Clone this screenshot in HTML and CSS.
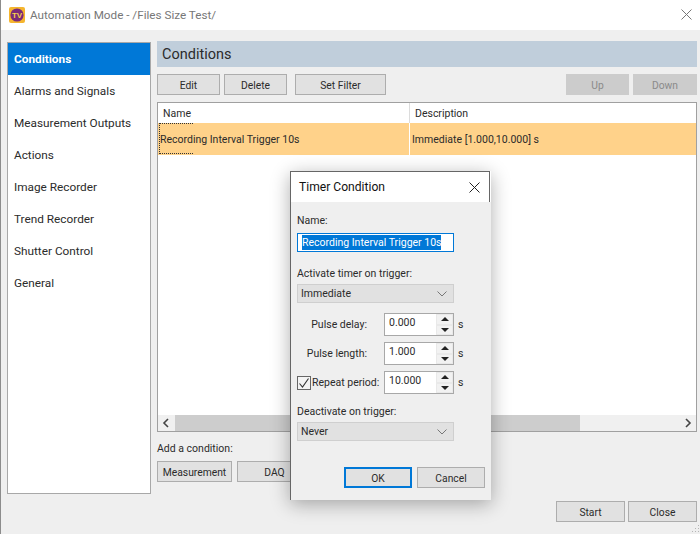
FILE: index.html
```html
<!DOCTYPE html>
<html lang="en">
<head>
<meta charset="utf-8">
<title>Automation Mode</title>
<link rel="stylesheet" href="styles.css">
</head>
<body>
<div class="window">
  <header class="titlebar">
    <svg class="app-icon" width="16" height="16" viewBox="0 0 16 16"><rect width="16" height="16" rx="2" fill="#f5b52e"/><circle cx="8" cy="8" r="6.6" fill="#7a2a78"/><text x="8" y="11" class="app-icon-text">TV</text></svg>
    <span class="title-text">Automation Mode - /Files Size Test/</span>
    <svg class="win-close" width="11" height="11" viewBox="0 0 11 11"><path d="M.5.5l10 10M10.5.5l-10 10" stroke="#777" fill="none"/></svg>
  </header>
  <div class="content">
    <div class="columns">
      <nav class="sidebar">
        <div class="nav-item active">Conditions</div>
        <div class="nav-item">Alarms and Signals</div>
        <div class="nav-item">Measurement Outputs</div>
        <div class="nav-item">Actions</div>
        <div class="nav-item">Image Recorder</div>
        <div class="nav-item">Trend Recorder</div>
        <div class="nav-item">Shutter Control</div>
        <div class="nav-item">General</div>
      </nav>
      <main class="main">
        <h1 class="heading">Conditions</h1>
        <div class="toolbar">
          <button class="btn w63">Edit</button>
          <button class="btn w63">Delete</button>
          <button class="btn w91">Set Filter</button>
          <span class="spacer"></span>
          <button class="btn w63 disabled">Up</button>
          <button class="btn w64 disabled">Down</button>
        </div>
        <section class="table">
          <div class="thead">
            <div class="col-name">Name</div>
            <div class="col-desc">Description</div>
          </div>
          <div class="row">
            <div class="cell-name"><span class="focus-mark"></span>Recording Interval Trigger 10s</div>
            <div class="cell-desc">Immediate [1.000,10.000] s</div>
          </div>
          <div class="table-fill"></div>
          <div class="hscroll">
            <svg class="arrow" width="17" height="16" viewBox="0 0 17 16"><path d="M10 4L6 8l4 4" fill="none" stroke="#444" stroke-width="1.6"/></svg>
            <div class="thumb"></div>
            <div class="track"></div>
            <svg class="arrow" width="17" height="16" viewBox="0 0 17 16"><path d="M7 4l4 4-4 4" fill="none" stroke="#444" stroke-width="1.6"/></svg>
          </div>
        </section>
        <div class="add-label">Add a condition:</div>
        <div class="add-row">
          <button class="btn w75">Measurement</button>
          <button class="btn w75">DAQ</button>
        </div>
      </main>
    </div>
    <footer class="footer">
      <button class="btn w69">Start</button>
      <button class="btn w69">Close</button>
    </footer>
  </div>
</div>

<svg class="grip" width="10" height="10" viewBox="0 0 10 10"><path d="M8 1h1v1H8zM5 4h1v1H5zM8 4h1v1H8zM2 7h1v1H2zM5 7h1v1H5zM8 7h1v1H8z" fill="#b5b5b5"/></svg>

<div class="dialog">
  <div class="dialog-title">
    <span>Timer Condition</span>
    <svg width="11" height="11" viewBox="0 0 11 11"><path d="M.5.5l10 10M10.5.5l-10 10" stroke="#222" fill="none"/></svg>
  </div>
  <div class="dialog-body">
    <div class="field-label first">Name:</div>
    <div class="name-input"><span class="selected">Recording Interval Trigger 10s</span></div>
    <div class="field-label second">Activate timer on trigger:</div>
    <div class="select">
      <span>Immediate</span>
      <svg width="10" height="6" viewBox="0 0 10 6"><path d="M.5.5L5 5 9.500.5" fill="none" stroke="#777"/></svg>
    </div>
    <div class="spin-row r1">
      <label class="spin-label">Pulse delay:</label>
      <div class="spin"><span class="spin-value">0.000</span><span class="spin-btns"><i class="up"></i><i class="down"></i></span></div>
      <span class="unit">s</span>
    </div>
    <div class="spin-row r2">
      <label class="spin-label">Pulse length:</label>
      <div class="spin"><span class="spin-value">1.000</span><span class="spin-btns"><i class="up"></i><i class="down"></i></span></div>
      <span class="unit">s</span>
    </div>
    <div class="spin-row r2">
      <span class="check"><svg width="12" height="12" viewBox="0 0 12 12"><path d="M1.500 6.500l3 3.500L10.500 1.500" fill="none" stroke="#333" stroke-width="1.100"/></svg></span>
      <label class="check-label">Repeat period:</label>
      <div class="spin"><span class="spin-value">10.000</span><span class="spin-btns"><i class="up"></i><i class="down"></i></span></div>
      <span class="unit">s</span>
    </div>
    <div class="field-label third">Deactivate on trigger:</div>
    <div class="select">
      <span>Never</span>
      <svg width="10" height="6" viewBox="0 0 10 6"><path d="M.5.5L5 5 9.500.5" fill="none" stroke="#777"/></svg>
    </div>
    <div class="dialog-actions">
      <button class="btn ok">OK</button>
      <button class="btn cancel">Cancel</button>
    </div>
  </div>
</div>
</body>
</html>
```

FILE: styles.css
```css
* { box-sizing: border-box; }
html, body { margin: 0; height: 100%; }
body {
  width: 700px; height: 534px; overflow: hidden; position: relative;
  font-family: Roboto, sans-serif; font-size: 10.500px; color: #2b2b2b; background: #efefef;
}
.window { width: 700px; height: 534px; display: flex; flex-direction: column; border-left: 1px solid #8c8c8c; }
.titlebar { height: 30px; background: #fff; display: flex; align-items: center; padding: 0 8px; flex: none; }
.app-icon { margin-right: 5px; margin-top: -1px; }
.app-icon-text { font: bold 8px "Liberation Sans", sans-serif; fill: #f7d24a; text-anchor: middle; }
.title-text { font-size: 11.700px; color: #777; }
.win-close { margin-left: auto; margin-top: -2px; }
.content { flex: 1; display: flex; flex-direction: column; padding: 11px 3px 12px 6px; }
.columns { display: flex; gap: 6px; height: 452px; flex: none; }
.sidebar { width: 144px; height: 452px; background: #fff; border: 1px solid #a8a8a8; margin-top: 1px; flex: none; }
.nav-item { height: 32px; line-height: 32px; padding: 0 0 0 6px; font-size: 11.800px; }
.nav-item.active { background: #0078d7; color: #fff; font-weight: 700; }
.main { flex: 1; display: flex; flex-direction: column; }
.heading { margin: 0; height: 26px; line-height: 28px; background: #c0cedb; font-size: 14.500px; font-weight: 400; padding-left: 5px; }
.toolbar { display: flex; gap: 4px; margin-top: 7px; height: 21px; }
.spacer { flex: 1; }
.btn { height: 21px; padding: 1px 0 0; font: 10.300px Roboto, sans-serif; color: #2b2b2b; background: #e1e1e1; border: 1px solid #adadad; }
.btn.disabled { background: #cccccc; border-color: #cccccc; color: #8a8a8a; }
.w63 { width: 63px; }
.w64 { width: 64px; }
.w91 { width: 91px; margin-left: 4px; }
.w75 { width: 75px; }
.w69 { width: 69px; }
.table { margin-top: 7px; height: 330px; background: #fff; border: 1px solid #a0a0a0; display: flex; flex-direction: column; }
.thead { height: 20px; display: flex; line-height: 22px; flex: none; }
.col-name { width: 252px; padding-left: 5px; border-right: 1px solid #dcdcdc; }
.col-desc { padding-left: 5px; }
.row { height: 32px; display: flex; line-height: 34px; background: #ffd28a; flex: none; }
.cell-name { width: 252px; padding-left: 2px; border-right: 1px solid #fff; position: relative; }
.focus-mark { position: absolute; left: 1px; top: 0; width: 34px; height: 31px; border: 1px dotted #333; border-right: 0; }
.cell-desc { padding-left: 2px; }
.table-fill { flex: 1; }
.hscroll { height: 16px; background: #f0f0f0; display: flex; flex: none; align-items: center; }
.arrow { flex: none; }
.thumb { height: 16px; width: 405px; background: #cdcdcd; }
.track { flex: 1; }
.add-label { margin-top: 8px; height: 16px; line-height: 18px; }
.add-row { display: flex; gap: 5px; margin-top: 5px; }
.footer { display: flex; justify-content: flex-end; gap: 3px; margin-top: 8px; }
.grip { position: absolute; right: 0; bottom: 0; }

.dialog { position: absolute; left: 290px; top: 171px; width: 201px; height: 329px; display: flex; flex-direction: column; box-shadow: 0 4px 18px rgba(0,0,0,.32); border-left: 1px solid #666; }
.dialog-title { height: 31px; background: #fff; border-top: 1px solid #666; border-right: 1px solid #666; width: 199px; display: flex; align-items: center; justify-content: space-between; padding: 0 9px 0 8px; font-size: 12.100px; color: #111; flex: none; }
.dialog-body { flex: 1; background: #efefef; padding: 0 6px; display: flex; flex-direction: column; }
.field-label { height: 16px; line-height: 17px; }
.first { margin-top: 10px; }
.second { margin-top: 13px; }
.third { margin-top: 9px; }
.name-input { margin-top: 5px; width: 157px; height: 19px; background: #fff; border: 1px solid #0078d7; padding: 1px 4px; line-height: 15px; }
.selected { background: #0078d7; color: #fff; display: inline-block; height: 15px; white-space: nowrap; }
.select { margin-top: 3px; width: 157px; height: 19px; background: #e1e1e1; border: 1px solid #cfcfcf; display: flex; align-items: center; justify-content: space-between; padding: 0 3px; }
.select svg { margin-right: 3px; }
.spin-row { display: flex; align-items: center; height: 23px; }
.r1 { margin-top: 10px; }
.r2 { margin-top: 6px; }
.spin-label { width: 87px; text-align: right; padding-right: 17px; flex: none; }
.spin { width: 70px; height: 23px; display: flex; background: #fff; border: 1px solid #a8a8a8; flex: none; }
.spin-value { flex: 1; padding-left: 4px; line-height: 17px; }
.spin-btns { width: 17px; background: #e9e9e9; display: flex; flex-direction: column; flex: none; }
.spin-btns i { flex: 1; display: flex; align-items: center; justify-content: center; border: 1px solid #e9e9e9; background: #f2f2f2; }
.spin-btns i::after { content: ""; border-left: 4px solid transparent; border-right: 4px solid transparent; }
.up::after { border-bottom: 4px solid #222; }
.down::after { border-top: 4px solid #222; }
.unit { margin-left: 4px; }
.check { width: 14px; height: 14px; border: 1px solid #666; background: #f4f4f4; display: flex; flex: none; }
.check-label { width: 73px; padding-left: 1px; flex: none; white-space: nowrap; }
.dialog-actions { display: flex; gap: 5px; margin-top: 26px; margin-left: 47px; }
.ok { width: 69px; border: 2px solid #0078d7; }
.cancel { width: 69px; }
```
